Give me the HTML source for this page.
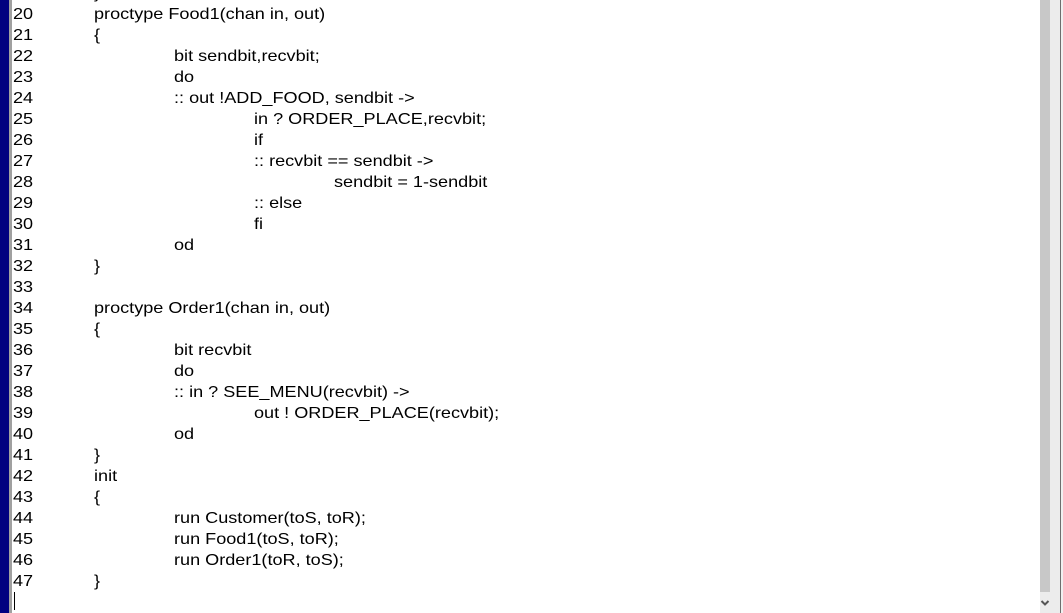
<!DOCTYPE html>
<html><head><meta charset="utf-8"><style>
html,body{margin:0;padding:0;width:1063px;height:613px;overflow:hidden;background:#fff;position:relative;font-family:"Liberation Sans",Arial,sans-serif;font-size:16px;color:#000}
.bar{position:absolute;left:0;top:0;width:9px;height:613px;background:#000080}
.bar2{position:absolute;left:9px;top:0;width:3px;height:613px;background:#a0a0a0}
.l{position:absolute;height:21px;line-height:21px;white-space:pre;transform:scaleX(1.13);transform-origin:0 0}
.n{left:13px}
.sb{position:absolute;left:1040px;top:0;width:10px;height:592px;background:#c8c8c8}
.tr{position:absolute;left:1050px;top:0;width:10px;height:613px;background:#ececec}
.tr2{position:absolute;left:1040px;top:592px;width:10px;height:21px;background:#ececec}
.ed{position:absolute;left:1060px;top:0;width:1px;height:613px;background:#6e6e6e}
.ed2{position:absolute;left:1061px;top:0;width:2px;height:613px;background:#f0f0f0}
.cur{position:absolute;left:14px;top:592px;width:1px;height:18px;background:#000}
</style></head><body>
<div class="bar"></div><div class="bar2"></div>
<div class="l" style="left:94px;top:-17px">}</div>
<div class="l n" style="top:4px">20</div><div class="l" style="left:94px;top:4px">proctype Food1(chan in, out)</div>
<div class="l n" style="top:25px">21</div><div class="l" style="left:94px;top:25px">{</div>
<div class="l n" style="top:46px">22</div><div class="l" style="left:174px;top:46px">bit sendbit,recvbit;</div>
<div class="l n" style="top:67px">23</div><div class="l" style="left:174px;top:67px">do</div>
<div class="l n" style="top:88px">24</div><div class="l" style="left:174px;top:88px">:: out !ADD_FOOD, sendbit -&gt;</div>
<div class="l n" style="top:109px">25</div><div class="l" style="left:254px;top:109px">in ? ORDER_PLACE,recvbit;</div>
<div class="l n" style="top:130px">26</div><div class="l" style="left:254px;top:130px">if</div>
<div class="l n" style="top:151px">27</div><div class="l" style="left:254px;top:151px">:: recvbit == sendbit -&gt;</div>
<div class="l n" style="top:172px">28</div><div class="l" style="left:334px;top:172px">sendbit = 1-sendbit</div>
<div class="l n" style="top:193px">29</div><div class="l" style="left:254px;top:193px">:: else</div>
<div class="l n" style="top:214px">30</div><div class="l" style="left:254px;top:214px">fi</div>
<div class="l n" style="top:235px">31</div><div class="l" style="left:174px;top:235px">od</div>
<div class="l n" style="top:256px">32</div><div class="l" style="left:94px;top:256px">}</div>
<div class="l n" style="top:277px">33</div>
<div class="l n" style="top:298px">34</div><div class="l" style="left:94px;top:298px">proctype Order1(chan in, out)</div>
<div class="l n" style="top:319px">35</div><div class="l" style="left:94px;top:319px">{</div>
<div class="l n" style="top:340px">36</div><div class="l" style="left:174px;top:340px">bit recvbit</div>
<div class="l n" style="top:361px">37</div><div class="l" style="left:174px;top:361px">do</div>
<div class="l n" style="top:382px">38</div><div class="l" style="left:174px;top:382px">:: in ? SEE_MENU(recvbit) -&gt;</div>
<div class="l n" style="top:403px">39</div><div class="l" style="left:254px;top:403px">out ! ORDER_PLACE(recvbit);</div>
<div class="l n" style="top:424px">40</div><div class="l" style="left:174px;top:424px">od</div>
<div class="l n" style="top:445px">41</div><div class="l" style="left:94px;top:445px">}</div>
<div class="l n" style="top:466px">42</div><div class="l" style="left:94px;top:466px">init</div>
<div class="l n" style="top:487px">43</div><div class="l" style="left:94px;top:487px">{</div>
<div class="l n" style="top:508px">44</div><div class="l" style="left:174px;top:508px">run Customer(toS, toR);</div>
<div class="l n" style="top:529px">45</div><div class="l" style="left:174px;top:529px">run Food1(toS, toR);</div>
<div class="l n" style="top:550px">46</div><div class="l" style="left:174px;top:550px">run Order1(toR, toS);</div>
<div class="l n" style="top:571px">47</div><div class="l" style="left:94px;top:571px">}</div>
<div class="cur"></div>
<div class="tr"></div><div class="sb"></div><div class="tr2"></div>
<svg style="position:absolute;left:1040px;top:598px" width="10" height="10" viewBox="0 0 10 10"><path d="M1.5 3 L5 6.5 L8.5 3" stroke="#555" stroke-width="2" fill="none"/></svg>
<div class="ed"></div><div class="ed2"></div>
</body></html>
